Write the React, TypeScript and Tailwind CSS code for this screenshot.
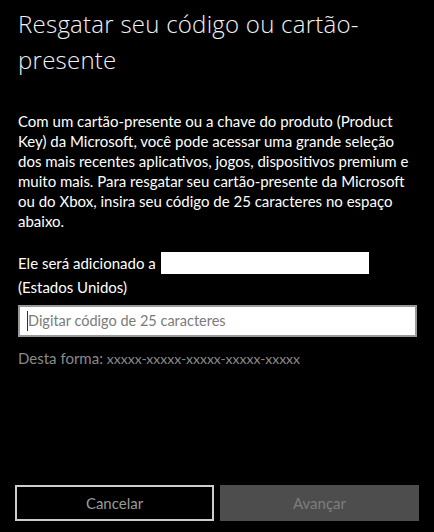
export default function App() {
  return (
    <div
      className="flex h-[532px] w-[434px] flex-col bg-black text-white"
      style={{ fontFamily: 'Lato, "Open Sans", sans-serif' }}
    >
      <div className="px-[18px]">
        <h1
          className="mt-[6px] text-[24px] font-light leading-[36px] tracking-[0.25px] text-[#f2f2f2]"
          style={{ fontFamily: '"Open Sans", sans-serif' }}
        >
          Resgatar seu código ou cartão-
          <br />
          presente
        </h1>

        <p className="mt-[33px] text-[15px] leading-[20px] text-white">
          Com um cartão-presente ou a chave do produto (Product Key) da Microsoft, você pode acessar uma grande seleção dos mais recentes aplicativos, jogos, dispositivos premium e muito mais. Para resgatar seu cartão-presente da Microsoft ou do Xbox, insira seu código de 25 caracteres no espaço abaixo.
        </p>

        <div className="mt-[21px] text-[15px] leading-[21px]">
          <div className="flex h-[22px] items-center">
            <span>Ele será adicionado a</span>
            <span className="ml-[5px] h-[22px] w-[208px] bg-white" />
          </div>
          <div className="mt-[3px]">(Estados Unidos)</div>
        </div>

        <div className="mt-[7px] flex h-[32px] w-[399px] items-center border-2 border-[#999999] bg-white pl-[7px]">
          <span className="h-[20px] w-px bg-[#333]" />
          <span className="text-[14.5px] text-[#7a7a7a]">Digitar código de 25 caracteres</span>
        </div>

        <div className="mt-[10px] text-[15px] text-[#8a8a8a]">
          Desta forma: <span className="text-[14px]">xxxxx-xxxxx-xxxxx-xxxxx-xxxxx</span>
        </div>
      </div>

      <div className="mt-auto mb-[11px] flex gap-[6px] px-[15px]">
        <button className="h-[36px] w-[201px] border-2 border-[#cccccc] bg-black text-[15px] text-[#9a9a9a]">
          Cancelar
        </button>
        <button className="h-[36px] w-[201px] bg-[#4d4d4d] text-[15px] text-[#7e7e7e]">
          Avançar
        </button>
      </div>
    </div>
  );
}
